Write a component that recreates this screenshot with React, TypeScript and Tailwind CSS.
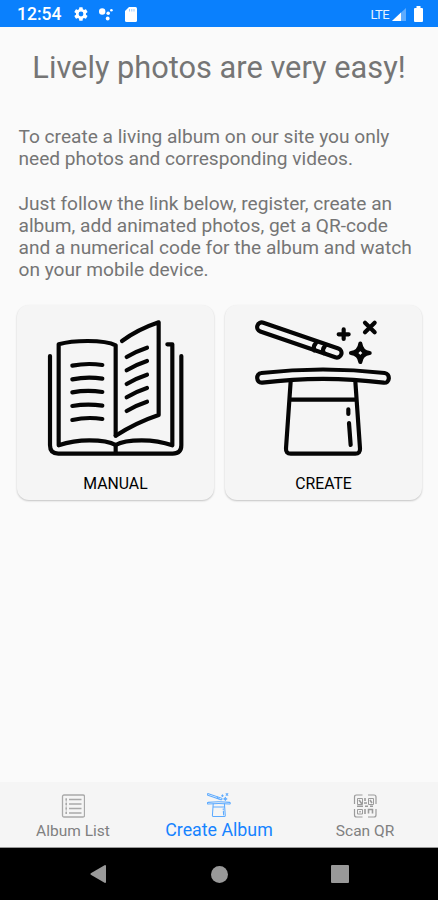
import type { ReactNode } from "react";

function StatusBar() {
  return (
    <header className="flex h-[27px] items-center bg-[#0a80fd] pl-[17px] pr-3 text-white">
      <span className="w-[46px] whitespace-nowrap pt-[3px] text-[17.500px] font-medium leading-none">12:54</span>
      <svg className="ml-[10px] mt-[1px] h-4 w-4" viewBox="0 0 24 24" fill="currentColor">
        <path d="M19.4 13a7.500 7.500 0 0 0 0-2l2.200-1.700a.6.6 0 0 0 .1-.7l-2-3.500a.6.6 0 0 0-.7-.2l-2.500 1a7.600 7.600 0 0 0-1.700-1l-.4-2.700a.5.5 0 0 0-.5-.4h-4a.5.5 0 0 0-.5.4L9 4.900a7.600 7.600 0 0 0-1.700 1l-2.500-1a.5.500 0 0 0-.6.200l-2 3.500a.5.500 0 0 0 .1.700L4.500 11a7.500 7.500 0 0 0 0 2l-2.200 1.700a.6.600 0 0 0-.1.700l2 3.500c.1.200.4.300.6.200l2.500-1c.5.400 1.100.7 1.700 1l.4 2.700c0 .2.200.4.500.4h4c.2 0 .5-.2.500-.4l.4-2.700a7.600 7.600 0 0 0 1.700-1l2.500 1c.2.100.5 0 .6-.2l2-3.500a.6.600 0 0 0-.1-.7zM12 15.600a3.600 3.600 0 1 1 0-7.200 3.600 3.600 0 0 1 0 7.200z" />
      </svg>
      <svg className="ml-[9px] h-[14px] w-[15px]" viewBox="0 0 15 14" fill="currentColor">
        <circle cx="4.200" cy="4.500" r="3.200" />
        <circle cx="10.200" cy="6.300" r="1.800" />
        <circle cx="13.400" cy="3.300" r="1.300" />
        <circle cx="9.700" cy="11.500" r="1.900" />
      </svg>
      <svg className="ml-[12px] mt-[1px] h-[15px] w-[12px]" viewBox="0 0 12 15">
        <path fill="currentColor" d="M4 0h6.500A1.500 1.500 0 0 1 12 1.500v12a1.500 1.500 0 0 1-1.500 1.500h-9A1.500 1.500 0 0 1 0 13.500V4z" />
        <path stroke="#0a80fd" strokeWidth="1" d="M4.500 2v2.500M6.800 2v2.500M9 2v2.500" opacity=".4" />
      </svg>
      <span className="ml-auto pt-[1px] text-[13px] leading-none tracking-[-0.6px] opacity-90">LTE</span>
      <svg className="ml-[3px] mt-[2px] h-[13px] w-[14px]" viewBox="0 0 14 13">
        <path fill="#ffffff" fillOpacity=".35" d="M14 0v13H0z" />
        <path fill="#ffffff" d="M9 4.600V13H0z" />
      </svg>
      <svg className="ml-[8px] mr-[3px] h-[16px] w-[9px]" viewBox="0 0 9 16" fill="currentColor">
        <path d="M2.500 0h4v2H8a1 1 0 0 1 1 1v12a1 1 0 0 1-1 1H1a1 1 0 0 1-1-1V3a1 1 0 0 1 1-1h1.500z" />
      </svg>
    </header>
  );
}

function BookIcon() {
  return (
    <svg className="h-[138px] w-[138px]" viewBox="141 88 414 414" fill="none" stroke="#050505" strokeWidth="12.500" strokeLinecap="round" strokeLinejoin="round">
      <path d="M150 199V467Q150 492 175 492H518Q544 492 544 467V199" />
      <path d="M347 438V167Q322 154 263 154Q210 154 176 164V467Q220 452 268 452Q323 452 347 466Q371 452 425 452Q475 452 517 467V164H502" />
      <path d="M347 466V490" />
      <path d="M366 154Q414 119 476 98V376Q410 398 347 438" />
      <path d="M217 228Q262 219 307 226M217 269Q262 260 307 267M217 308Q262 300 307 307M217 349Q262 341 307 348M217 391Q262 381 307 388" />
      <path d="M380 202Q410 184 441 174M380 242Q410 224 441 214M380 283Q410 265 441 255M380 323Q410 305 441 295M380 364Q410 346 441 336" />
    </svg>
  );
}

function HatIcon({ className, weight = 12.5 }: { className: string; weight?: number }) {
  return (
    <svg className={className} viewBox="111 88 414 414" fill="none" stroke="currentColor" strokeWidth={weight} strokeLinecap="round" strokeLinejoin="round">
      <rect x="-133" y="-14" width="266" height="28" rx="14" transform="translate(244 151) rotate(19)" />
      <path d="M294 160Q284 170 289 182M321 169Q312 178 317 190" />
      <path d="M377 119V148M362 134H392M441 99L470 128M470 99L441 128" />
      <path d="M427 162Q430 187 455 190Q430 193 427 217Q424 193 399 190Q424 187 427 162Z" />
      <path d="M427 178L439 190L427 202L415 190Z" strokeWidth="9" />
      <path d="M130 250Q315 229 500 250C518 252 516 282 497 279Q315 256 133 279C113 281 113 251 130 250Z" />
      <path d="M218 275L204 476Q203 492 218 492H412Q427 492 426 476L412 275M216 330H414" />
      <path d="M391 359V373M393 400L398 466" />
    </svg>
  );
}

function ActionCard({ label, children }: { label: string; children: ReactNode }) {
  return (
    <button className="flex h-[195px] w-[197px] flex-col items-center rounded-[12px] bg-[#f5f5f5] pt-[14px] text-black shadow-[0_1px_2px_rgba(0,0,0,0.22)]">
      {children}
      <span className="mt-[17px] text-[15.800px] leading-[20px]">{label}</span>
    </button>
  );
}

function ListIcon() {
  return (
    <svg className="h-6 w-6" viewBox="0 0 24 24" fill="none" stroke="#a9a9a9" strokeWidth="1.300">
      <rect x="1.500" y="1" width="22" height="22" rx="1.500" />
      <path d="M8 5.500H20.500M8 10H20.500M8 14.500H20.500M8 19H20.500" />
      <path strokeWidth="2" d="M4.500 5.500H6M4.500 10H6M4.500 14.500H6M4.500 19H6" />
      <path strokeWidth=".6" d="M5.200 4v16" />
    </svg>
  );
}

function QrIcon() {
  return (
    <svg className="h-6 w-6" viewBox="0 0 24 24" fill="none" stroke="#9b9b9b" strokeWidth="1.200">
      <path d="M1.500 10V3q0-2 2-2h6M15 1h6q2 0 2 2v7M1.500 15v6q0 2 2 2h6M15 23h6q2 0 2-2v-6" />
      <path strokeWidth="1" d="M4.500 4.500h5v6h-5zM15.500 4.500h5v6h-5zM4.500 15.500h5v4.500h-5z" />
      <path strokeWidth="1.600" d="M6 6l3 4M12 4v3M11 9h3M17 6l2 3M4 12.300h6M12 12.300h3M17 12.300h3M12 15v5M15.500 19.500v-4h4v4M6.300 17.700h1.500" />
    </svg>
  );
}

export default function App() {
  return (
    <div className="flex h-[900px] w-[438px] flex-col overflow-hidden bg-[#fafafa] font-['Roboto',sans-serif]">
      <StatusBar />
      <main className="flex-1 text-[#757575]">
        <h1 className="mt-[21px] whitespace-nowrap text-center text-[30.750px] leading-[40px]">Lively photos are very easy!</h1>
        <div className="mt-[38px] flex flex-col gap-[22px] whitespace-nowrap pl-[18.500px] text-[19.130px] leading-[22.300px]">
          <p>To create a living album on our site you only<br />need photos and corresponding videos.</p>
          <p>Just follow the link below, register, create an<br />album, add animated photos, get a QR-code<br />and a numerical code for the album and watch<br />on your mobile device.</p>
        </div>
        <div className="mt-[23px] flex gap-[11px] pl-[17px]">
          <ActionCard label="MANUAL"><BookIcon /></ActionCard>
          <ActionCard label="CREATE"><HatIcon className="h-[138px] w-[138px] text-[#050505]" /></ActionCard>
        </div>
      </main>
      <nav className="grid h-[66px] grid-cols-3 border-b border-[#999999] bg-[#f5f5f5] text-[#808080]">
        <button className="flex flex-col items-center pt-[12px] text-[15.500px]">
          <ListIcon />
          <span className="mt-[3px] leading-[20px]">Album List</span>
        </button>
        <button className="flex flex-col items-center pt-[11px] text-[17.800px] text-[#1683ff]">
          <HatIcon className="h-6 w-6 text-[#5caaff]" weight={18} />
          <span className="mt-[3px] leading-[20px]">Create Album</span>
        </button>
        <button className="flex flex-col items-center pt-[12px] text-[15.500px]">
          <QrIcon />
          <span className="mt-[3px] leading-[20px]">Scan QR</span>
        </button>
      </nav>
      <footer className="flex h-[52px] items-center justify-between bg-black pl-[90px] pr-[89px]">
        <svg className="h-[18px] w-[17px]" viewBox="0 0 17 18"><path fill="#999999" d="M.8 8.300Q0 9 .8 9.700L15 18q1 0 1-1V1q0-1-1-1z" /></svg>
        <div className="h-[17px] w-[17px] rounded-full bg-[#999999]" />
        <div className="h-[18px] w-[18px] rounded-[1px] bg-[#999999]" />
      </footer>
    </div>
  );
}
